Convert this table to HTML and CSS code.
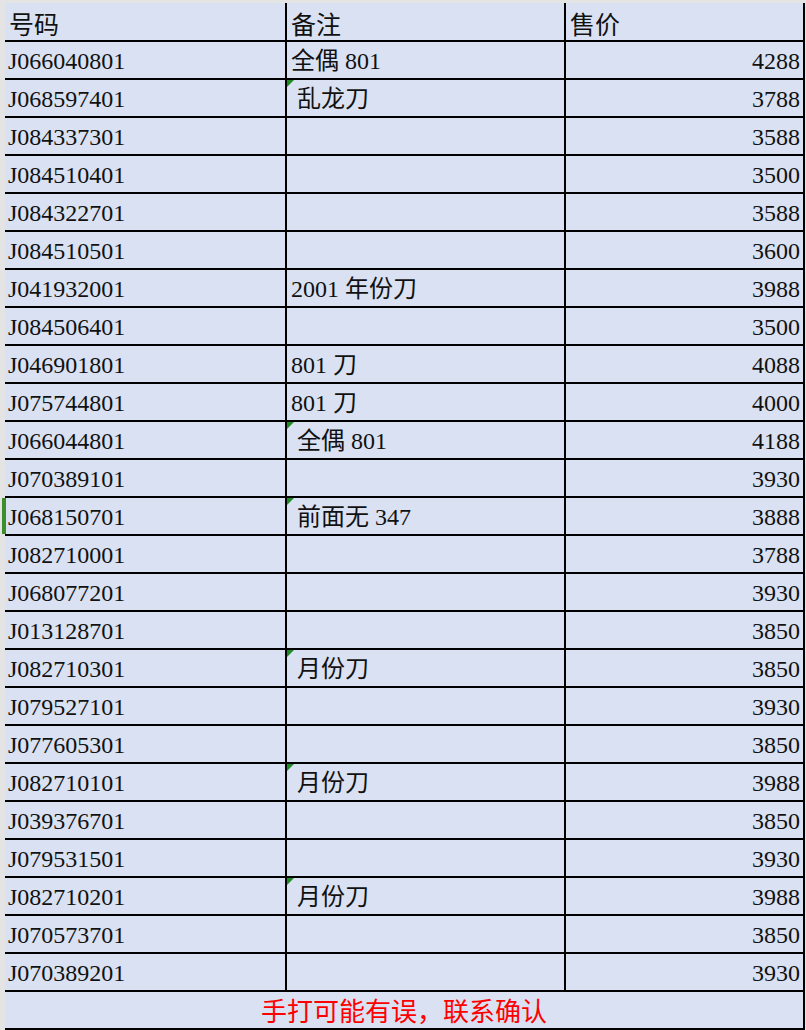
FILE: index.html
```html
<!DOCTYPE html>
<html lang="zh">
<head>
<meta charset="utf-8">
<title>号码 备注 售价</title>
<link rel="stylesheet" href="styles.css">
</head>
<body>
<div class="sheet">
  <div class="row head">
    <div class="cell c1">号码</div>
    <div class="cell c2">备注</div>
    <div class="cell c3">售价</div>
  </div>
  <div class="row"><div class="cell c1">J066040801</div><div class="cell c2">全偶<span class="n"> 801</span></div><div class="cell c3">4288</div></div>
  <div class="row"><div class="cell c1">J068597401</div><div class="cell c2 note">乱龙刀</div><div class="cell c3">3788</div></div>
  <div class="row"><div class="cell c1">J084337301</div><div class="cell c2"></div><div class="cell c3">3588</div></div>
  <div class="row"><div class="cell c1">J084510401</div><div class="cell c2"></div><div class="cell c3">3500</div></div>
  <div class="row"><div class="cell c1">J084322701</div><div class="cell c2"></div><div class="cell c3">3588</div></div>
  <div class="row"><div class="cell c1">J084510501</div><div class="cell c2"></div><div class="cell c3">3600</div></div>
  <div class="row"><div class="cell c1">J041932001</div><div class="cell c2"><span class="n">2001 </span>年份刀</div><div class="cell c3">3988</div></div>
  <div class="row"><div class="cell c1">J084506401</div><div class="cell c2"></div><div class="cell c3">3500</div></div>
  <div class="row"><div class="cell c1">J046901801</div><div class="cell c2"><span class="n">801 </span>刀</div><div class="cell c3">4088</div></div>
  <div class="row"><div class="cell c1">J075744801</div><div class="cell c2"><span class="n">801 </span>刀</div><div class="cell c3">4000</div></div>
  <div class="row"><div class="cell c1">J066044801</div><div class="cell c2 note">全偶<span class="n"> 801</span></div><div class="cell c3">4188</div></div>
  <div class="row"><div class="cell c1">J070389101</div><div class="cell c2"></div><div class="cell c3">3930</div></div>
  <div class="row marked"><div class="cell c1">J068150701</div><div class="cell c2 note">前面无<span class="n"> 347</span></div><div class="cell c3">3888</div></div>
  <div class="row"><div class="cell c1">J082710001</div><div class="cell c2"></div><div class="cell c3">3788</div></div>
  <div class="row"><div class="cell c1">J068077201</div><div class="cell c2"></div><div class="cell c3">3930</div></div>
  <div class="row"><div class="cell c1">J013128701</div><div class="cell c2"></div><div class="cell c3">3850</div></div>
  <div class="row"><div class="cell c1">J082710301</div><div class="cell c2 note">月份刀</div><div class="cell c3">3850</div></div>
  <div class="row"><div class="cell c1">J079527101</div><div class="cell c2"></div><div class="cell c3">3930</div></div>
  <div class="row"><div class="cell c1">J077605301</div><div class="cell c2"></div><div class="cell c3">3850</div></div>
  <div class="row"><div class="cell c1">J082710101</div><div class="cell c2 note">月份刀</div><div class="cell c3">3988</div></div>
  <div class="row"><div class="cell c1">J039376701</div><div class="cell c2"></div><div class="cell c3">3850</div></div>
  <div class="row"><div class="cell c1">J079531501</div><div class="cell c2"></div><div class="cell c3">3930</div></div>
  <div class="row"><div class="cell c1">J082710201</div><div class="cell c2 note">月份刀</div><div class="cell c3">3988</div></div>
  <div class="row"><div class="cell c1">J070573701</div><div class="cell c2"></div><div class="cell c3">3850</div></div>
  <div class="row"><div class="cell c1">J070389201</div><div class="cell c2"></div><div class="cell c3">3930</div></div>
  <div class="row foot"><div class="cell cf">手打可能有误，联系确认</div></div>
</div>
</body>
</html>
```
FILE: styles.css
```css
html, body {
  margin: 0;
  padding: 0;
}
body {
  background: #e4e4e4;
  width: 806px;
  height: 1030px;
  overflow: hidden;
  font-family: "Liberation Serif", "Noto Sans CJK SC", serif;
  color: #111;
}
.sheet {
  margin: 3px 0 0 5px;
  width: 800px;
  background: #d9e1f2;
}
.row {
  position: relative;
  display: grid;
  grid-template-columns: 282px 279px 239px;
  height: 38px;
  box-sizing: border-box;
  border-bottom: 2px solid #000;
}
.row.head {
  height: 39px;
}
.cell {
  position: relative;
  box-sizing: border-box;
  border-right: 2px solid #000;
  font-size: 24px;
  line-height: 36px;
  height: 36px;
  padding-top: 1px;
  white-space: nowrap;
  overflow: hidden;
}
.n {
  font-family: "Liberation Serif", serif;
}
.head .cell {
  font-size: 25px;
  line-height: 37px;
  height: 37px;
  padding-top: 2px;
  font-family: "Noto Sans CJK SC", sans-serif;
}
.c1 {
  padding-left: 3px;
}
.c2 {
  padding-left: 4px;
}
.c2.note {
  padding-left: 10px;
}
.c2.note::before {
  content: "";
  position: absolute;
  top: 0;
  left: 0;
  width: 0;
  height: 0;
  border-top: 7px solid #1e8b24;
  border-right: 7px solid transparent;
}
.c3 {
  text-align: right;
  padding-right: 3px;
}
.head .c1 {
  padding-left: 4px;
}
.head .c3 {
  text-align: left;
  padding-left: 4px;
}
.row.marked::before {
  content: "";
  position: absolute;
  left: -3px;
  top: 0;
  width: 4px;
  height: 36px;
  background: #3c8f2c;
}
.row.foot {
  grid-template-columns: 800px;
}
.cf {
  text-align: center;
  color: #ff0000;
  font-family: "Noto Sans CJK SC", sans-serif;
  font-size: 26px;
  padding-top: 0;
}
```
